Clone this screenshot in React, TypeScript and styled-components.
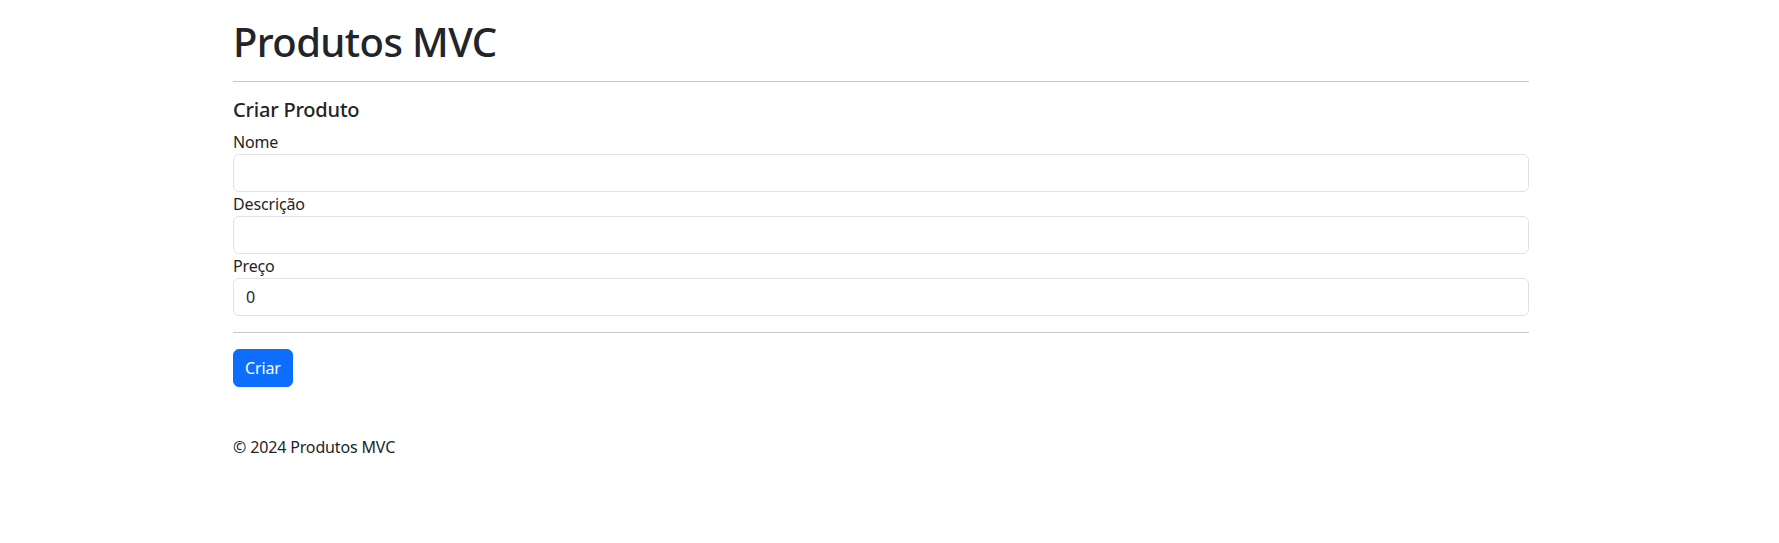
import React from "react";
import styled, { createGlobalStyle } from "styled-components";

const FONT = `"Noto Sans", "Open Sans", sans-serif`;

const Global = createGlobalStyle`
  html, body { margin: 0; padding: 0; background: #fff; }
  body {
    font-family: ${FONT};
    font-size: 16px;
    line-height: 1.5;
    color: #212529;
  }
  * { box-sizing: border-box; }
`;

const Viewport = styled.div`
  padding-right: 17px;
`;

const Container = styled.div`
  max-width: 1296px;
  margin: 0 auto;
`;

const Main = styled.main`
  padding-top: 18px;
`;

const Title = styled.h1`
  margin: 0 0 8px;
  font-size: 40px;
  font-weight: 500;
  line-height: 47px;
  letter-spacing: -0.6px;
`;

const Rule = styled.hr`
  margin: 16px 0;
  border: 0;
  border-top: 1px solid #c8c9ca;
  height: 0;
`;

const SubTitle = styled.h5`
  margin: 0 0 8px;
  font-size: 20px;
  font-weight: 500;
  line-height: 24px;
  letter-spacing: -0.2px;
`;

const Form = styled.form`
  display: flex;
  flex-direction: column;
`;

const Group = styled.div`
  display: flex;
  flex-direction: column;
`;

const Label = styled.label`
  font-size: 16px;
  line-height: 24px;
  letter-spacing: -0.15px;
`;

const Input = styled.input`
  display: block;
  width: 100%;
  height: 38px;
  padding: 6px 12px;
  font-family: ${FONT};
  font-size: 16px;
  line-height: 24px;
  color: #212529;
  background: #fff;
  border: 1px solid #dee2e6;
  border-radius: 6px;
  outline: none;
`;

const Button = styled.button`
  align-self: flex-start;
  height: 38px;
  padding: 6px 11px;
  font-family: ${FONT};
  font-size: 16px;
  line-height: 24px;
  letter-spacing: -0.15px;
  color: #fff;
  background: #0d6efd;
  border: 1px solid #0d6efd;
  border-radius: 6px;
  cursor: pointer;
`;

const Footer = styled.footer`
  margin-top: 48px;
  line-height: 24px;
  letter-spacing: -0.15px;
`;

export default function App() {
  return (
    <Viewport>
      <Global />
      <Container>
        <Main>
          <Title>Produtos MVC</Title>
          <Rule />
          <SubTitle>Criar Produto</SubTitle>
          <Form onSubmit={(e) => e.preventDefault()}>
            <Group>
              <Label htmlFor="nome">Nome</Label>
              <Input id="nome" type="text" />
            </Group>
            <Group>
              <Label htmlFor="descricao">Descrição</Label>
              <Input id="descricao" type="text" />
            </Group>
            <Group>
              <Label htmlFor="preco">Preço</Label>
              <Input id="preco" type="text" defaultValue="0" />
            </Group>
            <Rule />
            <Button type="submit">Criar</Button>
          </Form>
        </Main>
        <Footer>© 2024 Produtos MVC</Footer>
      </Container>
    </Viewport>
  );
}
